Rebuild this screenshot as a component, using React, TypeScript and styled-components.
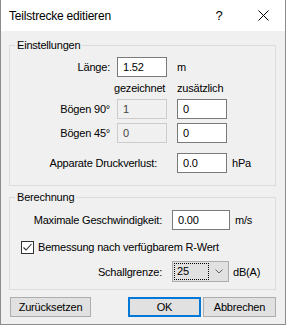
import React from "react";
import styled, { createGlobalStyle } from "styled-components";

const GlobalStyle = createGlobalStyle`
  html, body {
    margin: 0;
    padding: 0;
  }
  body {
    font-family: "Liberation Sans", Arial, sans-serif;
    font-size: 11px;
    letter-spacing: -0.2px;
    color: #000;
    background: #f0f0f0;
  }
`;

function App() {
  return (
    <Window>
      <GlobalStyle />
      <TitleBar>
        <Title>Teilstrecke editieren</Title>
        <CaptionButton>
          <HelpGlyph>?</HelpGlyph>
        </CaptionButton>
        <CaptionButton>
          <svg width="11" height="11" viewBox="0 0 11 11">
            <path d="M0.5 0.5 L10.5 10.5 M10.5 0.5 L0.5 10.5" stroke="#000" strokeWidth="1" />
          </svg>
        </CaptionButton>
      </TitleBar>

      <Body>
        <Group $pt={5} $pb={12}>
          <Legend>Einstellungen</Legend>
          <FieldRow $mt={0}>
            <Label>Länge:</Label>
            <TextBox defaultValue="1.52" />
            <Unit>m</Unit>
          </FieldRow>
          <FieldRow $mt={1}>
            <span />
            <ColHead $shift={-3}>gezeichnet</ColHead>
            <ColHead $shift={0}>zusätzlich</ColHead>
          </FieldRow>
          <FieldRow $mt={1}>
            <Label>Bögen 90°</Label>
            <TextBox defaultValue="1" readOnly $muted />
            <TextBox defaultValue="0" />
          </FieldRow>
          <FieldRow $mt={4}>
            <Label>Bögen 45°</Label>
            <TextBox defaultValue="0" readOnly $muted />
            <TextBox defaultValue="0" />
          </FieldRow>
          <FieldRow $mt={10}>
            <Label $span={2} $pr={20}>
              Apparate Druckverlust:
            </Label>
            <TextBox defaultValue="0.0" />
            <Unit $ml={0}>hPa</Unit>
          </FieldRow>
        </Group>

        <Group $pt={6} $pb={7} style={{ marginTop: 4 }}>
          <Legend>Berechnung</Legend>
          <LineRow $mt={0} $h={20}>
            <WideLabel>Maximale Geschwindigkeit:</WideLabel>
            <TextBox defaultValue="0.00" $w={58} />
            <Unit $ml={5}>m/s</Unit>
          </LineRow>
          <LineRow $mt={10} $h={14}>
            <CheckBox>
              <svg width="11" height="11" viewBox="0 0 11 11">
                <path d="M1.5 5.5 L4 8 L9.5 2" stroke="#333" strokeWidth="1.1" fill="none" />
              </svg>
            </CheckBox>
            <CheckLabel>Bemessung nach verfügbarem R-Wert</CheckLabel>
          </LineRow>
          <LineRow $mt={7} $h={21}>
            <WideLabel>Schallgrenze:</WideLabel>
            <Combo>
              <ComboValue>25</ComboValue>
              <svg width="8" height="5" viewBox="0 0 8 5">
                <path d="M0.5 0.5 L4 4 L7.5 0.5" stroke="#606060" strokeWidth="1" fill="none" />
              </svg>
            </Combo>
            <Unit $ml={4}>dB(A)</Unit>
          </LineRow>
        </Group>

        <ButtonBar>
          <Button $w={81}>Zurücksetzen</Button>
          <Spacer />
          <Button $w={73} $primary>
            OK
          </Button>
          <Button $w={73} style={{ marginLeft: 2 }}>
            Abbrechen
          </Button>
        </ButtonBar>
      </Body>
    </Window>
  );
}

export default App;

const Window = styled.div`
  width: 286px;
  height: 325px;
  box-sizing: border-box;
  display: flex;
  flex-direction: column;
  border: 1px solid #8c8c8c;
  border-top: none;
  background: #f0f0f0;
  overflow: hidden;
`;

const TitleBar = styled.div`
  height: 31px;
  flex: none;
  background: #fff;
  display: flex;
  align-items: center;
  padding-left: 8px;
`;

const Title = styled.span`
  flex: 1;
  font-size: 12px;
`;

const CaptionButton = styled.div`
  width: 44px;
  height: 31px;
  display: flex;
  align-items: center;
  justify-content: center;
`;

const HelpGlyph = styled.span`
  font-size: 13px;
`;

const Body = styled.div`
  flex: 1;
  display: flex;
  flex-direction: column;
  padding: 7px 9px 0 8px;
`;

const Group = styled.fieldset<{ $pt: number; $pb: number }>`
  margin: 0;
  padding: ${(p) => p.$pt}px 0 ${(p) => p.$pb}px 0;
  border: 1px solid #dcdcdc;
  min-width: 0;
`;

const Legend = styled.legend`
  margin-left: 5px;
  padding: 0 2px;
  height: 14px;
  line-height: 14px;
`;

const FieldRow = styled.div<{ $mt: number }>`
  display: grid;
  grid-template-columns: 107px 60px 55px 1fr;
  align-items: center;
  height: 20px;
  margin-top: ${(p) => p.$mt}px;
`;

const Label = styled.span<{ $span?: number; $pr?: number }>`
  grid-column: span ${(p) => p.$span ?? 1};
  text-align: right;
  padding-right: ${(p) => p.$pr ?? 7}px;
  white-space: nowrap;
`;

const ColHead = styled.span<{ $shift: number }>`
  margin-left: ${(p) => p.$shift}px;
  white-space: nowrap;
`;

const Unit = styled.span<{ $ml?: number }>`
  margin-left: ${(p) => p.$ml ?? 0}px;
  white-space: nowrap;
`;

const TextBox = styled.input<{ $w?: number; $muted?: boolean }>`
  width: ${(p) => p.$w ?? 50}px;
  height: 20px;
  box-sizing: border-box;
  margin: 0;
  padding: 0 0 0 5px;
  border: 1px solid ${(p) => (p.$muted ? "#cccccc" : "#7a7a7a")};
  background: ${(p) => (p.$muted ? "#f0f0f0" : "#fff")};
  font-family: "Liberation Sans", Arial, sans-serif;
  font-size: 11px;
  letter-spacing: -0.2px;
  color: ${(p) => (p.$muted ? "#444" : "#000")};
  outline: none;
`;

const LineRow = styled.div<{ $mt: number; $h: number }>`
  display: flex;
  align-items: center;
  height: ${(p) => p.$h}px;
  margin-top: ${(p) => p.$mt}px;
`;

const WideLabel = styled.span`
  width: 162px;
  box-sizing: border-box;
  flex: none;
  text-align: right;
  padding-right: 10px;
  white-space: nowrap;
`;

const CheckBox = styled.span`
  width: 13px;
  height: 13px;
  box-sizing: border-box;
  margin-left: 11px;
  border: 1px solid #333;
  background: #fff;
  display: flex;
  align-items: center;
  justify-content: center;
`;

const CheckLabel = styled.span`
  margin-left: 4px;
  white-space: nowrap;
`;

const Combo = styled.div`
  width: 57px;
  height: 21px;
  box-sizing: border-box;
  border: 1px solid #adadad;
  background: #e1e1e1;
  display: flex;
  align-items: center;
  padding: 0 5px 0 1px;
  justify-content: space-between;
`;

const ComboValue = styled.span`
  width: 35px;
  height: 17px;
  box-sizing: border-box;
  border: 1px dotted #000;
  line-height: 15px;
  padding-left: 2px;
`;

const ButtonBar = styled.div`
  display: flex;
  margin-top: 7px;
  padding-left: 1px;
`;

const Spacer = styled.div`
  flex: 1;
`;

const Button = styled.button<{ $w: number; $primary?: boolean }>`
  width: ${(p) => p.$w}px;
  height: 20px;
  box-sizing: border-box;
  margin: 0;
  padding: 0;
  background: #e1e1e1;
  border: ${(p) => (p.$primary ? "2px solid #0078d7" : "1px solid #adadad")};
  font-family: "Liberation Sans", Arial, sans-serif;
  font-size: 11px;
  letter-spacing: -0.2px;
  color: #000;
`;
